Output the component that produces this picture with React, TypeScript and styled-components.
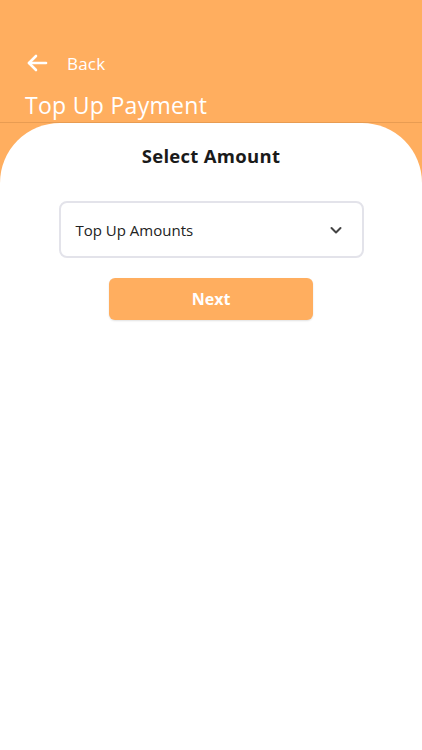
import React from "react";
import styled, { createGlobalStyle } from "styled-components";

const Global = createGlobalStyle`
  html, body { margin: 0; padding: 0; }
  body { font-family: "Open Sans", "Noto Sans", sans-serif; background: #ffae5f; }
  * { box-sizing: border-box; }
`;

const Page = styled.div`
  min-height: 750px;
  display: flex;
  flex-direction: column;
  background: #ffae5f;
`;

const Header = styled.header`
  padding: 49px 25px 0 25px;
  height: 123px;
  border-bottom: 1px solid #e89c52;
  display: flex;
  flex-direction: column;
`;

const BackRow = styled.div`
  display: flex;
  align-items: center;
  gap: 18px;
  height: 28px;
  color: #fff;
`;

const BackLabel = styled.span`
  font-size: 17px;
  font-weight: 400;
  letter-spacing: 0.2px;
`;

const Title = styled.h1`
  margin: 13px 0 0 0;
  color: #fff;
  font-size: 23px;
  font-weight: 400;
  line-height: 30px;
  letter-spacing: 0.3px;
`;

const Card = styled.main`
  flex: 1;
  background: #fff;
  border-radius: 60px 60px 0 0;
  display: flex;
  flex-direction: column;
  align-items: center;
  padding-top: 20px;
`;

const Heading = styled.h2`
  margin: 0;
  font-size: 18.5px;
  font-weight: 700;
  color: #1a1a1a;
  line-height: 26px;
  letter-spacing: 0.3px;
`;

const Select = styled.div`
  margin-top: 32px;
  width: 305px;
  height: 57px;
  border: 2px solid #e3e3ea;
  border-radius: 8px;
  display: flex;
  align-items: center;
  justify-content: space-between;
  padding: 0 19px 0 15px;
  color: #222;
  font-size: 15px;
`;

const NextButton = styled.button`
  margin-top: 20px;
  width: 204px;
  height: 42px;
  border: none;
  border-radius: 6px;
  background: #ffae5f;
  color: #fff;
  font-family: inherit;
  font-size: 16px;
  font-weight: 700;
  box-shadow: 0 1px 2px rgba(0,0,0,0.12);
`;

export default function App() {
  return (
    <>
      <Global />
      <Page>
        <Header>
          <BackRow>
            <svg width="24" height="24" viewBox="0 0 24 24" fill="none" stroke="#fff" strokeWidth="2.6" strokeLinecap="round" strokeLinejoin="round">
              <path d="M21 12H4" />
              <path d="M11 5l-7 7 7 7" />
            </svg>
            <BackLabel>Back</BackLabel>
          </BackRow>
          <Title>Top Up Payment</Title>
        </Header>
        <Card>
          <Heading>Select Amount</Heading>
          <Select>
            <span>Top Up Amounts</span>
            <svg width="14" height="14" viewBox="0 0 14 14" fill="none" stroke="#444" strokeWidth="2" strokeLinecap="round" strokeLinejoin="round">
              <path d="M2.5 5l4.5 4.5L11.5 5" />
            </svg>
          </Select>
          <NextButton>Next</NextButton>
        </Card>
      </Page>
    </>
  );
}
